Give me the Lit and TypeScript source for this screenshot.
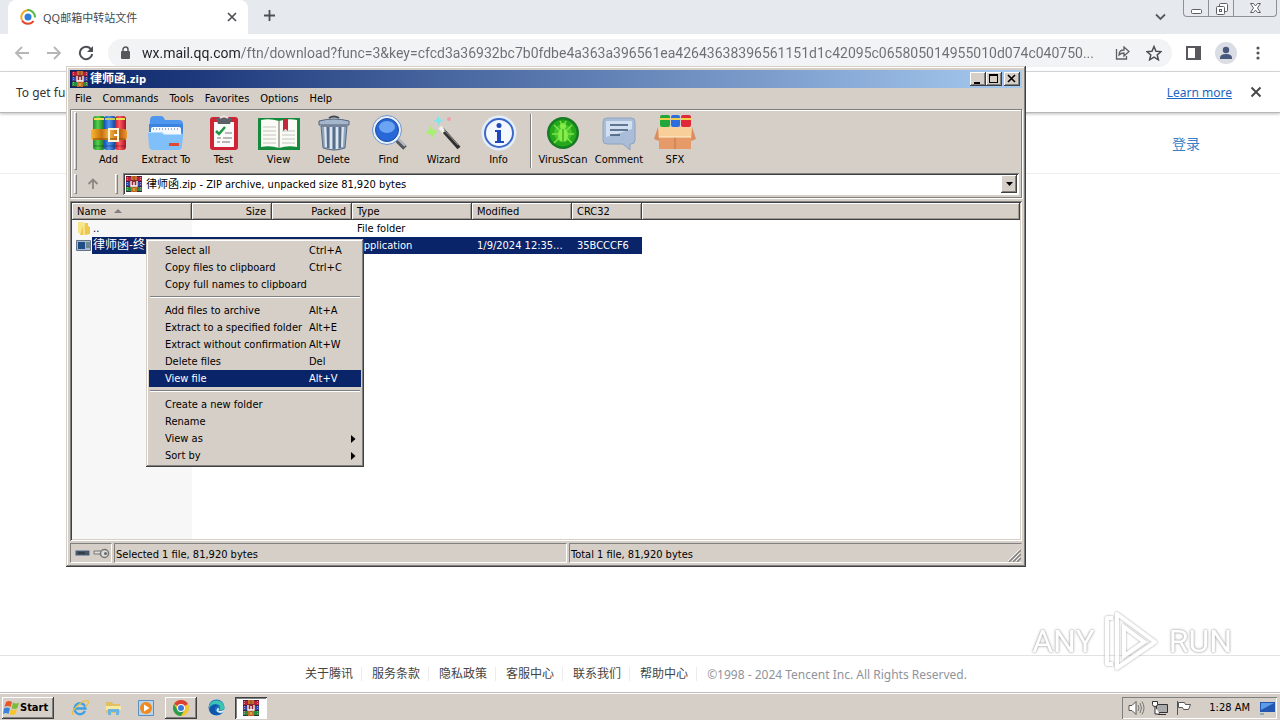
import { LitElement, html, css, svg } from "lit";
import { customElement } from "lit/decorators.js";
import { classMap } from "lit/directives/class-map.js";

const rarLogo = html`<svg width="16" height="16" viewBox="0 0 16 16" aria-hidden="true">
  <rect width="16" height="5" fill="#b5213c"/><rect y="5" width="16" height="6" fill="#3347a8"/>
  <rect y="11" width="16" height="5" fill="#2c8a3e"/>
  <path d="M0 .5h16M0 5.500h16M0 10.500h16M0 15.500h16" stroke="#3a1838" stroke-width=".8"/>
  <path d="M1.500 1v4M1.500 6v4M1.500 11v4M14.500 1v4M14.500 6v4M14.500 11v4" stroke="#e9a0b0" stroke-width=".8" stroke-dasharray="1 1"/>
  <rect x="5" width="6" height="16" fill="#c4702a"/><path d="M8 0v5M8 11v5" stroke="#8c4418"/>
  <rect x="4" y="4" width="8" height="7" fill="#8a2a34"/>
  <path d="M5 5v5h6V5M8 6v4" fill="none" stroke="#fff" stroke-width="1.300"/>
  <path d="M7 12h2v3H7z" fill="#d8a038"/></svg>`;

const toolIcons: Record<string, unknown> = {
  add: svg`<defs><linearGradient id="g1"><stop offset="0" stop-color="#1a8f2c"/><stop offset=".4" stop-color="#57d04c"/><stop offset="1" stop-color="#0d6a20"/></linearGradient>
    <linearGradient id="g2"><stop offset="0" stop-color="#174fb0"/><stop offset=".4" stop-color="#4d96f0"/><stop offset="1" stop-color="#123c90"/></linearGradient>
    <linearGradient id="g3"><stop offset="0" stop-color="#c01828"/><stop offset=".4" stop-color="#ff5a60"/><stop offset="1" stop-color="#b01028"/></linearGradient>
    <linearGradient id="g4"><stop offset="0" stop-color="#f8b830"/><stop offset=".3" stop-color="#c87010"/><stop offset=".5" stop-color="#f4b848"/><stop offset=".8" stop-color="#b86010"/><stop offset="1" stop-color="#f09830"/></linearGradient></defs>
    <rect x="2" y="1" width="12" height="34" rx="3" fill="url(#g1)"/><rect x="13" y="1" width="12" height="34" rx="3" fill="url(#g2)"/><rect x="24" y="1" width="11" height="34" rx="3" fill="url(#g3)"/>
    <path d="M3 4h10M25 4h9" stroke="#f0e050" stroke-width="2"/><path d="M14 4h10" stroke="#c8d060" stroke-width="2"/><path d="M3 31h10M14 31h10M25 31h9" stroke="#0005" stroke-width="1"/>
    <rect x="0" y="14" width="36" height="11" rx="3" fill="url(#g4)"/><path d="M2 24h32" stroke="#8a4a08"/>
    <rect x="18" y="14" width="9" height="12" fill="none" stroke="#fff3d8" stroke-width="2"/><path d="M23 20h5" stroke="#fff" stroke-width="2"/>`,
  extract: svg`<path d="M2 5q0-4 4-4h7q2 0 3 2l1 2h14q4 0 4 4v12H1z" fill="#4d98ee"/><path d="M1 9h34v8H1z" fill="#3a84e0"/><path d="M3 14q0-2 2-2h26q2 0 2 2v8H3z" fill="#f4f8fc"/>
    <path d="M5 14h26" stroke="#9ab4d0" stroke-width="2" stroke-dasharray="1 2"/><path d="M0 19q0-2 2-2h11q2 0 3 2h17q3 0 2 3l-1 9q0 4-4 4H5q-4 0-4-4z" fill="#7fc0fb"/><path d="M1 17.500h12l3 2h18" fill="none" stroke="#b4defd"/><rect x="21" y="28" width="10" height="3" fill="#e04830"/>`,
  test: svg`<rect x="4" y="2" width="28" height="33" rx="3" fill="#cf2436"/><rect x="8" y="7" width="20" height="25" fill="#fafafa"/><path d="M10 3h16l-2 6H12z" fill="#5c6068"/><path d="M14 3q4-3 8 0" stroke="#e8e8e8" stroke-width="2" fill="none"/>
    <path d="m10 16 3 3 6-7" fill="none" stroke="#1d9442" stroke-width="2.500"/><path d="M19 18h7M11 23h4M17 23h9M11 27h3M16 27h8" stroke="#777" stroke-width="1"/>`,
  view: svg`<path d="M-3 3h42v32H-3z" fill="#138a3c"/><path d="M0 5q9-2 18 1 9-3 18-1v27q-9-2-18 1-9-3-18-1z" fill="#fbfbf6"/><path d="M18 6v27" stroke="#9a9a90" stroke-width="1.500"/><path d="M2 12h13M2 16h13M2 20h13M2 24h13M2 28h13M21 16h13M21 20h13M21 24h13M21 28h13" stroke="#c0c4bc"/><path d="M22 4h5v12l-2.500-2-2.500 2z" fill="#c3283c"/>`,
  del: svg`<path d="M13 3q5-3 10 0" fill="none" stroke="#3c4858" stroke-width="2"/><path d="M3 6q15-4 30 0v4H3z" fill="#a3b6cc" stroke="#53637a"/><path d="M5 11h26l-2 22q-11 4-22 0z" fill="#8ea3bc" stroke="#5b6d84"/><path d="M9 12l1 20M15 12v22M21 12v22M27 12l-1 20" stroke="#dce6f0" stroke-width="2"/><path d="M12 12v21M18 12v22M24 12v21" stroke="#4b5c72" stroke-width="1.500"/>`,
  find: svg`<path d="m26 25 8 8" stroke="#50565e" stroke-width="5"/><path d="m27 24 7 7" stroke="#b4bac0" stroke-width="2"/><circle cx="16" cy="15" r="14.500" fill="#e9f1fa" stroke="#6c94d0"/><circle cx="16" cy="15" r="11.500" fill="#2767d6" stroke="#1c4ca8"/><ellipse cx="16" cy="12" rx="8" ry="6" fill="#6ca4f4"/>`,
  wizard: svg`<path d="m16 14 17 19" stroke="#303030" stroke-width="4"/><path d="m14 12 4 5" stroke="#f0f0f0" stroke-width="4"/><path d="m18 15 14 15" stroke="#999" stroke-width="1"/><path d="m12 0 1.500 4 4.500 1-4 2-1 4-2-4-4-1 4-2z" fill="#7fe4ee"/><path d="m5 10 2 5 5 1-4 3-1 4-3-4-5-1 4-3z" fill="#a8f070"/><circle cx="23" cy="4" r="2" fill="#f0a0a8"/>`,
  info: svg`<circle cx="18" cy="18" r="17.500" fill="#e4edfa"/><circle cx="18" cy="18" r="14" fill="#f4f8ff" stroke="#3c68c8" stroke-width="2"/><circle cx="18" cy="10.500" r="2.500" fill="#2048b8"/><path d="M14 15h6v11h3v2h-9v-2h2v-9h-2z" fill="#2048b8"/>`,
  virus: svg`<circle cx="18" cy="18" r="16" fill="#177a24"/><circle cx="18" cy="18" r="13.500" fill="#25a81c"/><circle cx="18" cy="18" r="9" fill="#5cd838" opacity=".6"/><ellipse cx="18" cy="20" rx="5" ry="7" fill="#86ec48"/><circle cx="18" cy="11" r="3" fill="#86ec48"/><path d="m9 10 5 5M27 10l-5 5M7 19h7M29 19h-7M9 28l5-5M27 28l-5-5M15 6l2 4M21 6l-2 4" stroke="#7ce444" stroke-width="1.500"/><path d="M18 14v13" stroke="#249018"/>`,
  comment: svg`<path d="M6 3h24q4 0 4 4v18q0 4-4 4h-1l0 6-7-6H6q-4 0-4-4V7q0-4 4-4z" fill="#a9bdd8" stroke="#8ea2be"/><path d="M5 6h26v8q-14 5-26 8z" fill="#d2dfee"/><path d="M9 10h18M9 15h18M9 20h10" stroke="#3d5474" stroke-width="1.600"/>`,
  sfx: svg`<rect x="3" y="0" width="10" height="12" rx="2" fill="#22a83a"/><rect x="14" y="0" width="9" height="12" rx="2" fill="#2c6ee0"/><rect x="24" y="0" width="10" height="12" rx="2" fill="#e02838"/><path d="M3 4h10M14 4h9M24 4h10" stroke="#f0d048" stroke-width="2"/>
    <path d="M2 18h32v16H2z" fill="#e59a68"/><path d="M18 20v14" stroke="#c07848"/><path d="M2 12h32l3 10H-1z" fill="#f8cf98"/><path d="m1 12-4 12 5 2zM35 12l4 12-5 2z" fill="#d88c60"/><path d="M2 22h32" stroke="#fff0d0"/>`,
};

const tools = [
  ["add", "Add", "t"], ["extract", "Extract To", "t wide"], ["test", "Test", "t"], ["view", "View", "t"],
  ["del", "Delete", "t"], ["find", "Find", "t"], ["wizard", "Wizard", "t"], ["info", "Info", "t"],
  ["", "", ""],
  ["virus", "VirusScan", "t"], ["comment", "Comment", "t"], ["sfx", "SFX", "t"],
];

const menu: string[][] = [
  ["Select all", "Ctrl+A"], ["Copy files to clipboard", "Ctrl+C"], ["Copy full names to clipboard", ""], [],
  ["Add files to archive", "Alt+A"], ["Extract to a specified folder", "Alt+E"],
  ["Extract without confirmation", "Alt+W"], ["Delete files", "Del"], ["View file", "Alt+V"], [],
  ["Create a new folder", ""], ["Rename", ""], ["View as", ">"], ["Sort by", ">"],
];

@customElement("context-menu")
class ContextMenu extends LitElement {
  static styles = css`
    :host { display: block; box-sizing: border-box; width: 218px; padding: 3px; background: #d6cfc7;
      box-shadow: inset -1px -1px #404040, inset 1px 1px #d6cfc7, inset -2px -2px #808080, inset 2px 2px #fff; }
    button { display: grid; grid-template-columns: 144px 1fr 6px; width: 100%; height: 17px; padding: 0 4px 0 16px;
      border: 0; background: none; font: inherit; line-height: 17px; color: #000; text-align: left; white-space: nowrap; }
    .hot { background: #0a246a; color: #fff; }
    hr { height: 2px; margin: 3px 1px 4px; border: 0; background: linear-gradient(#808080 50%, #fff 50%); }
    svg { align-self: center; }
  `;
  render() {
    return menu.map((m) => m.length === 0 ? html`<hr>` : html`
      <button role="menuitem" class=${classMap({ hot: m[0] === "View file" })}>
        <span>${m[0]}</span><span>${m[1] === ">" ? "" : m[1]}</span>
        ${m[1] === ">" ? html`<svg width="5" height="8" viewBox="0 0 5 8"><path d="M0 0v8l4.500-4z"/></svg>` : ""}
      </button>`);
  }
}

@customElement("archive-window")
class ArchiveWindow extends LitElement {
  static styles = css`
    * { box-sizing: border-box; }
    :host { display: flex; flex-direction: column; box-sizing: border-box; padding: 4px; background: #d6cfc7;
      box-shadow: inset -1px -1px #404040, inset 1px 1px #d6cfc7, inset -2px -2px #808080, inset 2px 2px #fff; }
    button { font: inherit; color: #000; }
    .cjk { font-size: 12px; }
    .title { display: flex; align-items: center; height: 18px; padding: 0 2px; gap: 2px; color: #fff; font-weight: bold;
      background: linear-gradient(to right, #0a246a, #a6caf0); }
    h1 { flex: 1; margin: 0; font: inherit; line-height: 18px; }
    .win { display: flex; }
    .win button { display: block; width: 16px; height: 14px; padding: 0; border: 0; background: #d6cfc7;
      box-shadow: inset -1px -1px #404040, inset 1px 1px #fff, inset -2px -2px #808080; }
    .win button:last-child { margin-left: 2px; }
    .win svg { display: block; }
    nav { display: flex; height: 21px; padding-left: 5px; gap: 11px; }
    nav button { padding: 0; border: 0; background: none; line-height: 21px; }
    .bars { padding: 2px 2px 1px 3px; border: 1px solid #808080; box-shadow: inset 1px 1px #fff, 1px 1px #fff; }
    .tools { display: flex; height: 58px; }
    .grip { width: 3px; border: 1px solid; border-color: #fff #808080 #808080 #fff; }
    .t { display: flex; flex-direction: column; align-items: center; width: 55px; padding: 3px 0 0; border: 0; background: none; line-height: 18px; white-space: nowrap; }
    .t svg { overflow: visible; flex: none; }
    .wide { width: 60px; }
    .sep { width: 2px; margin: 2px 3px 2px 4px; background: linear-gradient(to right, #808080 50%, #fff 50%); }
    .tools .grip { margin-right: 4px; }
    .sep ~ .t { width: 56px; }
    .addr { display: flex; align-items: center; height: 24px; margin-top: 2px; }
    .addr .grip { height: 20px; }
    .up { width: 30px; padding: 0 0 0 2px; border: 0; background: none; line-height: 0; }
    .combo { display: flex; align-items: center; flex: 1; height: 22px; margin-left: 5px; padding: 2px; background: #fff;
      box-shadow: inset 1px 1px #808080, inset -1px -1px #fff, inset 2px 2px #404040; }
    .up + .grip { margin-left: 8px; }
    .combo svg { flex: none; margin-left: 1px; }
    select { flex: 1; appearance: none; border: 0; background: none; font: inherit; color: #000; padding: 0 4px; }
    .drop { display: grid; place-items: center; width: 16px; height: 18px; background: #d6cfc7; box-shadow: inset -1px -1px #404040, inset 1px 1px #fff, inset -2px -2px #808080; }
    .list { flex: 1; margin-top: 3px; padding: 2px; background: linear-gradient(to right, #f7f7f7 122px, #fff 122px);
      box-shadow: inset 1px 1px #808080, inset -1px -1px #fff, inset 2px 2px #404040, inset -2px -2px #d6cfc7; }
    table { width: 100%; border-collapse: collapse; table-layout: fixed; }
    th, td { height: 17px; padding: 0 5px; line-height: 17px; font-weight: normal; text-align: left; white-space: nowrap; overflow: hidden; }
    th { background: #d6cfc7; box-shadow: inset -1px -1px #404040, inset 1px 1px #fff, inset -2px -2px #a09a92; }
    th svg { margin: 0 0 2px 8px; }
    .num { padding-right: 6px; text-align: right; }
    .c120 { width: 120px; } .c100 { width: 100px; } .c80 { width: 80px; } .c70 { width: 70px; }
    td:first-child { padding: 0; }
    .name { display: flex; align-items: center; height: 17px; padding-left: 4px; gap: 1px; }
    .name span { flex: 1; padding-left: 1px; }
    .picked td:not(:last-child), .picked .name span { background: #0a246a; color: #fff; }
    .picked td:first-child { background: none; }
    .status { display: flex; height: 20px; margin-top: 2px; gap: 2px; line-height: 21px; }
    .status div { border: 1px solid; border-color: #808080 #fff #fff #808080; padding-left: 1px; }
    .status .keys { display: flex; align-items: center; gap: 3px; width: 42px; padding-left: 4px; }
    .status .sel { width: 453px; }
    .status .tot { display: flex; justify-content: space-between; flex: 1; border-right-color: #d6cfc7; }
    .tot svg { align-self: end; }
  `;
  render() {
    return html`
      <header class="title">${rarLogo}<h1><span class="cjk">律师函</span>.zip</h1>
        <div class="win">
          <button aria-label="Minimize"><svg width="16" height="14"><path d="M4 10h6v2H4z"/></svg></button>
          <button aria-label="Maximize"><svg width="16" height="14"><path d="M3 2h9v9H3zM4 4v6h7V4z" fill-rule="evenodd"/></svg></button>
          <button aria-label="Close"><svg width="16" height="14"><path d="m4 3 7 7M11 3l-7 7" stroke="#000" stroke-width="1.600"/></svg></button>
        </div></header>
      <nav>${["File", "Commands", "Tools", "Favorites", "Options", "Help"].map((m) => html`<button>${m}</button>`)}</nav>
      <div class="bars">
        <div class="tools"><span class="grip"></span>
          ${tools.map(([icon, label, cls]) => icon === "" ? html`<span class="sep"></span>` : html`
            <button class=${cls}><svg width="36" height="36" viewBox="0 0 36 36" aria-hidden="true">${toolIcons[icon]}</svg>${label}</button>`)}
        </div>
        <div class="addr"><span class="grip"></span>
          <button class="up" aria-label="Up"><svg width="12" height="12" viewBox="0 0 12 12"><path d="M6 11V2M1.500 6 6 1.500 10.500 6" fill="none" stroke="#8c8780" stroke-width="1.800"/></svg></button>
          <span class="grip"></span>
          <div class="combo">${rarLogo}
            <select aria-label="Path"><option>律师函.zip - ZIP archive, unpacked size 81,920 bytes</option></select>
            <span class="drop"><svg width="7" height="4"><path d="M0 0h7L3.500 4z"/></svg></span>
          </div>
        </div>
      </div>
      <div class="list"><table>
        <colgroup><col class="c120"><col class="c80"><col class="c80"><col class="c120"><col class="c100"><col class="c70"><col></colgroup>
        <thead><tr><th>Name<svg width="8" height="4"><path d="M0 4h8L4 0z" fill="#808080"/></svg></th><th class="num">Size</th><th class="num">Packed</th><th>Type</th><th>Modified</th><th>CRC32</th><th></th></tr></thead>
        <tbody>
          <tr><td><div class="name"><svg width="15" height="15" viewBox="0 0 15 15"><path d="M2 1h6v12l-6-1z" fill="#f7e58a"/><path d="M8 2h4v3l2 1v7l-5 1H4z" fill="#ecc94c"/><path d="M8 2v12" stroke="#fff8d0"/></svg><span>..</span></div></td>
            <td></td><td></td><td>File folder</td><td></td><td></td><td></td></tr>
          <tr class="picked"><td><div class="name"><svg width="15" height="11" viewBox="0 0 15 11"><path d="M.5.5h14v10H.5z" fill="#a9b9cc" stroke="#63758c"/><path d="M2 2h7v7H2z" fill="#1d4c86"/><path d="M10 3h4M10 5h4M10 7h4" stroke="#355"/></svg><span class="cjk">律师函-终</span></div></td>
            <td></td><td></td><td>Application</td><td>1/9/2024 12:35...</td><td>35BCCCF6</td><td></td></tr>
        </tbody></table></div>
      <footer class="status">
        <div class="keys"><svg width="15" height="7" viewBox="0 0 15 7"><rect x=".5" y=".5" width="14" height="5" rx="1" fill="#46566a" stroke="#8a98a8"/><path d="M3 3h7" stroke="#222"/></svg>
          <svg width="17" height="11" viewBox="0 0 17 11"><path d="M1 3h8v4H7V6H1z" fill="#ddd" stroke="#777"/><circle cx="11.500" cy="5.500" r="4" fill="#ddd" stroke="#777" stroke-width="1.500"/><circle cx="12.500" cy="5.500" r="1.500" fill="#666"/></svg></div>
        <div class="sel">Selected 1 file, 81,920 bytes</div>
        <div class="tot"><span>Total 1 file, 81,920 bytes</span><svg width="13" height="13"><path d="M1 13 13 1M5 13l8-8M9 13l4-4" stroke="#808080" stroke-width="1.500"/><path d="M0 12 12 0M4 12l8-8M8 12l4-4" stroke="#fff" stroke-width=".8"/></svg></div>
      </footer>`;
  }
}

@customElement("app-root")
class AppRoot extends LitElement {
  static styles = css`
    * { box-sizing: border-box; }
    :host { position: relative; display: flex; flex-direction: column; min-height: 100vh; overflow: hidden; background: #fff; color: #000;
      font: 11px "DejaVu Sans Condensed", "Noto Sans CJK SC", sans-serif; }
    button { padding: 0; border: 0; background: none; font: inherit; color: inherit; }
    svg { display: block; flex: none; }
    .chrome { font-family: "Noto Sans", "Noto Sans CJK SC", sans-serif; }
    .tabs { display: flex; align-items: center; height: 34px; padding-left: 8px; background: #e6e9ed; }
    .tab { display: flex; align-items: center; width: 240px; height: 34px; padding: 0 11px 0 12px; gap: 7px; border-radius: 8px 8px 0 0; background: #fff; color: #45494d; }
    .tab span { flex: 1; }
    .plus { margin-left: 15px; flex: 1; }
    .caret { margin-right: 17px; }
    .sys { display: flex; align-self: flex-start; height: 17px; margin-right: 3px; border: 1px solid #8d9299; border-top: 0; border-radius: 0 0 4px 4px; }
    .sys button { display: grid; place-items: center; width: 25px; border-right: 1px solid #8d9299; }
    .sys button:last-child { width: 42px; border: 0; }
    .bar { display: flex; align-items: center; height: 38px; padding: 0 15px 0 14px; border-bottom: 1px solid #dadce0; }
    .bar > button { margin-right: 16px; }
    .omni { display: flex; align-items: center; flex: 1; height: 28px; margin-left: -2px; margin-right: 14px; padding: 0 10px 0 12px; border-radius: 14px; background: #f1f3f4; }
    .omni input { flex: 1; min-width: 0; margin: 0 0 0 12px; padding: 0; border: 0; outline: 0; height: 24px; font: 14px Roboto, sans-serif;
      background: linear-gradient(to right, #202124 98px, #6a6f75 98px); background-clip: text; -webkit-text-fill-color: transparent; }
    .omni button { margin-left: 16px; }
    .bar > .last { margin: 0; }
    .bar > .side { margin-right: 14px; }
    .bar > .who { margin-right: 14px; }
    .info { position: relative; display: flex; align-items: center; height: 41px; padding: 0 18px 0 16px; font-size: 12px; color: #333; border-bottom: 1px solid #b5b8bb; box-shadow: 0 1px 3px #0004; }
    .info p { flex: 1; margin: 0; }
    .info a { margin-right: 18px; color: #1a66c4; }
    .web { display: flex; flex-direction: column; flex: 1; }
    .login { display: flex; justify-content: flex-end; align-items: center; height: 61px; padding-right: 80px; border-bottom: 1px solid #eee; font-size: 14px; }
    .login a { color: #3a7fc8; text-decoration: none; }
    main { flex: 1; }
    .foot { display: flex; justify-content: center; align-items: center; height: 37px; padding-right: 8px; border-top: 1px solid #e2e2e2;
      font: 12px "Noto Sans", "Noto Sans CJK SC", sans-serif; color: #8f949c; }
    .foot a { margin-right: 10px; padding-right: 8px; border-right: 1px solid #ececec; color: #444; text-decoration: none; line-height: 14px; }
    .task { display: flex; align-items: center; height: 28px; padding: 2px 3px 0 2px; gap: 5px; background: #d6cfc7; border-top: 1px solid #c0bdb8; box-shadow: inset 0 1px #fff; }
    .task button { display: grid; place-items: center; width: 28px; height: 22px; }
    .task .start { display: flex; align-items: center; width: 52px; margin-right: 7px; padding-left: 1px; font-weight: bold; }
    .task .up, .task .start { box-shadow: inset -1px -1px #404040, inset 1px 1px #fff, inset -2px -2px #808080; }
    .task .up, .task .down { width: 32px; }
    .task .down { background: #fff; box-shadow: inset 1px 1px #404040, inset -1px -1px #fff, inset 2px 2px #808080; }
    .tray { display: flex; align-items: center; gap: 7px; height: 22px; margin-left: auto; padding: 0 2px 0 6px; box-shadow: inset 1px 1px #808080, inset -1px -1px #fff; }
    .tray time { margin: 0 2px 0 10px; }
    archive-window { position: absolute; left: 66px; top: 66px; width: 960px; height: 501px; }
    context-menu { position: absolute; left: 146px; top: 239px; }
    .mark { position: absolute; right: 48px; bottom: 46px; display: flex; align-items: center; gap: 8px; color: #fff;
      font: 400 32px/66px Roboto, sans-serif; text-shadow: 0 0 2px #888, 0 0 3px #aaa; opacity: .8; }
    .mark svg { filter: drop-shadow(0 0 1px #888); }
  `;
  render() {
    const cross = html`<svg width="10" height="10"><path d="m1 1 8 8M9 1 1 9" stroke="#4c5054" stroke-width="1.700"/></svg>`;
    return html`
      <header class="chrome">
        <div class="tabs">
          <div class="tab"><svg width="16" height="16" viewBox="0 0 16 16"><circle cx="8" cy="8" r="3.500" fill="#2c7fe0"/><path d="M2 11A7 7 0 0 1 7 1.200" fill="none" stroke="#f5a81c" stroke-width="2"/><path d="M7 1.200A7 7 0 0 1 15 8.500" fill="none" stroke="#58b947" stroke-width="2"/><path d="M13.500 12A7 7 0 0 1 2 11.500" fill="none" stroke="#e8452c" stroke-width="2"/></svg>
            <span>QQ邮箱中转站文件</span><button aria-label="Close tab">${cross}</button></div>
          <div class="plus"><button aria-label="New tab"><svg width="13" height="13"><path d="M6.500 1v11M1 6.500h11" stroke="#4c5054" stroke-width="1.800"/></svg></button></div>
          <button class="caret" aria-label="Search tabs"><svg width="11" height="8"><path d="m1 1.500 4.500 4.500L10 1.500" fill="none" stroke="#555a60" stroke-width="1.800"/></svg></button>
          <div class="sys">
            <button aria-label="Minimize window"><svg width="13" height="12"><rect x="1.500" y="7.500" width="10" height="4" rx="1" fill="#fff" stroke="#5c6066"/></svg></button>
            <button aria-label="Restore window"><svg width="13" height="13"><rect x="4.500" y="1.500" width="8" height="8" rx="1" fill="#fff" stroke="#5c6066"/><rect x="1.500" y="4.500" width="8" height="8" rx="1" fill="#fff" stroke="#5c6066"/><rect x="4.500" y="7.500" width="2" height="2" fill="none" stroke="#5c6066"/></svg></button>
            <button aria-label="Close window"><svg width="13" height="12"><path d="M1.500 1.500h3l2 2.500 2-2.500h3L8.500 6l3 4.500h-3l-2-2.500-2 2.500h-3l3-4.500z" fill="#fff" stroke="#5c6066"/></svg></button>
          </div>
        </div>
        <div class="bar">
          <button aria-label="Back"><svg width="16" height="16"><path d="M15 8H2M8 2 2 8l6 6" fill="none" stroke="#b4b6b8" stroke-width="1.800"/></svg></button>
          <button aria-label="Forward"><svg width="16" height="16"><path d="M1 8h13M8 2l6 6-6 6" fill="none" stroke="#b4b6b8" stroke-width="1.800"/></svg></button>
          <button aria-label="Reload"><svg width="16" height="16"><path d="M13.200 4.500A6.200 6.200 0 1 0 14.200 9" fill="none" stroke="#4c5054" stroke-width="2"/><path d="M15 1v6H9z" fill="#4c5054"/></svg></button>
          <div class="omni"><svg width="10" height="13"><rect x="1" y="5" width="9" height="8" rx="1" fill="#54585c"/><path d="M3 6V3.500a2.500 2.500 0 0 1 5 0V6" fill="none" stroke="#54585c" stroke-width="1.500"/></svg>
            <input aria-label="Address" value="wx.mail.qq.com/ftn/download?func=3&key=cfcd3a36932bc7b0fdbe4a363a396561ea42643638396561151d1c42095c065805014955010d074c040750...">
            <button aria-label="Share"><svg width="16" height="14"><path d="M2.500 3v10h10v-3" fill="none" stroke="#5c6065" stroke-width="1.300"/><path d="M5 9q0-5 5-5V1l5 4.500L10 10V7Q7 7 5 9z" fill="none" stroke="#5c6065" stroke-width="1.300"/></svg></button>
            <button aria-label="Bookmark"><svg width="16" height="16" viewBox="0 0 16 16"><path d="m8 1.500 2 4.700 5 .4-3.800 3.300 1.200 4.900L8 12.200l-4.400 2.600 1.200-4.900L1 6.600l5-.4z" fill="none" stroke="#4c5054" stroke-width="1.500"/></svg></button></div>
          <button class="side" aria-label="Side panel"><svg width="15" height="14"><path d="M0 0h15v14H0zM2 2v10h7V2z" fill="#5a585d" fill-rule="evenodd"/></svg></button>
          <button class="who" aria-label="Profile"><svg width="22" height="22"><circle cx="11" cy="11" r="11" fill="#dadde3"/><circle cx="11" cy="8" r="3.200" fill="#48587c"/><path d="M5 16q0-4 6-4t6 4v1H5z" fill="#48587c"/></svg></button>
          <button class="last" aria-label="Menu"><svg width="14" height="14"><circle cx="7" cy="2" r="1.600" fill="#54585c"/><circle cx="7" cy="7" r="1.600" fill="#54585c"/><circle cx="7" cy="12" r="1.600" fill="#54585c"/></svg></button>
        </div>
        <div class="info"><p>To get fu</p><a href="#">Learn more</a><button aria-label="Dismiss"><svg width="12" height="12"><path d="m1.500 1.500 9 9M10.500 1.500l-9 9" stroke="#444" stroke-width="1.800"/></svg></button></div>
      </header>
      <div class="web">
        <div class="login"><a href="#">登录</a></div>
        <main></main>
        <footer class="foot">${["关于腾讯", "服务条款", "隐私政策", "客服中心", "联系我们", "帮助中心"].map((t) => html`<a href="#">${t}</a>`)}<span>©1998 - 2024 Tencent Inc. All Rights Reserved.</span></footer>
      </div>
      <div class="task">
        <button class="start"><svg width="17" height="16" viewBox="0 0 17 16"><path d="M3 2q3-2 6 0L7.500 7q-3-2-6 0z" fill="#e8562c"/><path d="M10 2.500q3 2 6 0L14.500 8q-3 2-6 0z" fill="#7dbb3c"/><path d="M1 8.500q3-2 6 0L5.500 14q-3-2-5.500 0z" fill="#3c82d8"/><path d="M8 9q3 2 6 0l-1.500 5q-3 2-6 0z" fill="#f7c42c"/></svg>Start</button>
        <button aria-label="Internet Explorer"><svg width="18" height="18" viewBox="0 0 18 18"><path d="M14 12A5.500 5.500 0 1 1 14.500 9.500H5" fill="none" stroke="#3ba0e4" stroke-width="2.400"/><path d="M2 16C-1 12 12 0 17 2q2 2-3 6" fill="none" stroke="#e8c040" stroke-width="1.200"/></svg></button>
        <button aria-label="Explorer"><svg width="17" height="16" viewBox="0 0 17 16"><path d="M1 2h6l1 2h7v9H1z" fill="#e0c060"/><path d="M1 6h15v4H1z" fill="#f8e8a0"/><path d="M3 9h11v6h-3v-3H6v3H3z" fill="#6cb4e0"/></svg></button>
        <button aria-label="Media Player"><svg width="16" height="16" viewBox="0 0 16 16"><path d="M.5.500h15v15H.5z" fill="#b8d4ec" stroke="#5c90c0"/><circle cx="8" cy="8" r="6" fill="#f08a1c"/><path d="M6 4.500 11.500 8 6 11.500z" fill="#fff"/></svg></button>
        <button class="up" aria-label="Chrome"><svg width="16" height="16" viewBox="0 0 16 16"><circle cx="8" cy="8" r="8" fill="#f7c52c"/><path d="M8 8 1.070 4A8 8 0 0 1 14.930 4z" fill="#dc4234"/><path d="M1.070 4A8 8 0 0 0 8 16l3.500-6L8 8 4.500 10z" fill="#2d9c4c"/><circle cx="8" cy="8" r="4" fill="#fff"/><circle cx="8" cy="8" r="3" fill="#3b78e0"/></svg></button>
        <button aria-label="Edge"><svg width="17" height="17" viewBox="0 0 17 17"><circle cx="8.500" cy="8.500" r="8" fill="#1673c4"/><path d="M1 7A8 8 0 0 1 16.500 8q0 4-5 3 2-6-4-6-4 0-6.500 4z" fill="#3cc4b0"/><path d="M7 9q-1 5 6 5-6 4-10 0-3-5 2-8 5-1 5 2-2-1-3 1z" fill="#0f56a8"/><path d="M10 8.500q2 2 0 3 3 1 5.500-.5l1 1-3 2q-5 0-5-3z" fill="#e4eef4"/></svg></button>
        <button class="down" aria-label="WinRAR">${rarLogo}</button>
        <div class="tray">
          <svg width="17" height="16" viewBox="0 0 17 16"><path d="M1 5.500h3l4-4v13l-4-4H1z" fill="#fff" stroke="#555"/><path d="M10 5q2 3 0 6M12 3q3 5 0 10M14 1.500q4 6.500 0 13" fill="none" stroke="#777"/></svg>
          <svg width="16" height="16" viewBox="0 0 16 16"><path d="M4.500 4.500h11v8h-11z" fill="#aaa" stroke="#333"/><path d="M6 14.500h8" stroke="#333"/><path d="M.5 1.500h5v3q0 2-2.500 2t-2.500-2zM3 7v7h5" fill="#fff" stroke="#333"/></svg>
          <svg width="17" height="16" viewBox="0 0 17 16"><path d="M2.500 1v14" stroke="#555"/><path d="M3.500 2.500h6l1 2h5l-2 5h-5l-1-2h-4z" fill="#fff" stroke="#555"/></svg>
          <time>1:28 AM</time>
          <svg width="16" height="14" viewBox="0 0 16 14"><path d="M1 1h15v10H1z" fill="#2458b0"/><path d="M2 2h13L2 9z" fill="#5c9ce8"/><path d="M1 13h4" stroke="#48a"/></svg>
        </div>
      </div>
      <archive-window></archive-window>
      <context-menu></context-menu>
      <div class="mark"><span>ANY</span>
        <svg width="58" height="62" viewBox="0 0 58 62" fill="none" stroke="#fff" stroke-width="4"><path d="M10 8H4v46h6M14 4v54l38-26z" stroke-linejoin="round"/><path d="M21 17v29l20-14z"/></svg>
        <span>RUN</span></div>`;
  }
}
